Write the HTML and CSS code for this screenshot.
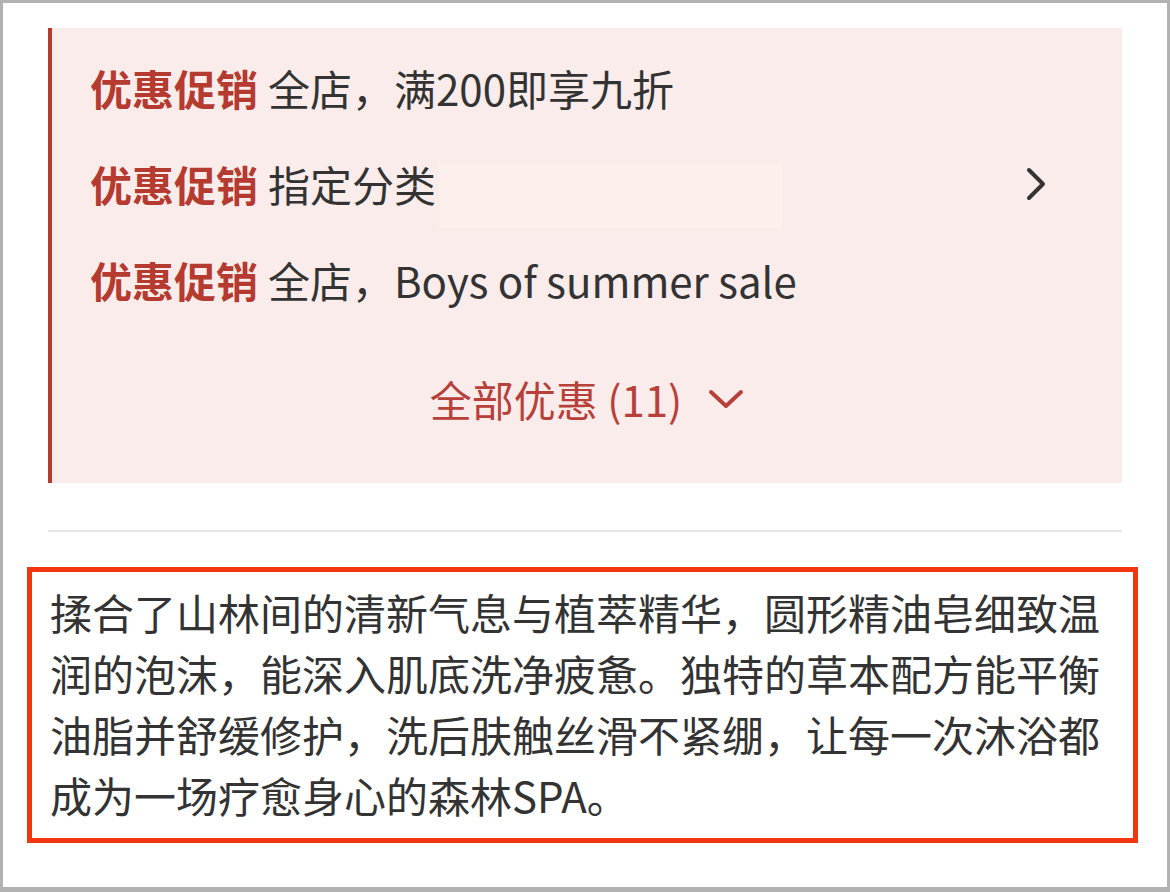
FILE: index.html
```html
<!DOCTYPE html>
<html lang="zh-CN">

<head>
    <meta charset="UTF-8">
    <meta name="viewport" content="width=device-width, initial-scale=1.0">
    <title>商品详情</title>

    <link rel="stylesheet" href="styles.css">
</head>

<body>
    <div class="frame">
        <main class="content">
            <section class="promo">
                <div class="promo-row">
                    <span class="promo-tag">优惠促销</span>
                    <span class="promo-text">全店，满200即享九折</span>
                </div>
                <div class="promo-row">
                    <span class="promo-tag">优惠促销</span>
                    <span class="promo-text">指定分类</span>
                    <span class="promo-blank"></span>
                    <svg class="arrow-right" width="24" height="34" viewBox="0 0 24 34">
                        <path d="M5 3 L19 17 L5 31" fill="none" stroke="#333" stroke-width="4" stroke-linecap="round" stroke-linejoin="round" />
                    </svg>
                </div>
                <div class="promo-row">
                    <span class="promo-tag">优惠促销</span>
                    <span class="promo-text">全店，Boys of summer sale</span>
                </div>
                <div class="promo-more">
                    <span>全部优惠 (11)</span>
                    <svg class="arrow-down" width="36" height="24" viewBox="0 0 36 24">
                        <path d="M3 5 L18 19 L33 5" fill="none" stroke="#b8403a" stroke-width="4" stroke-linecap="round" stroke-linejoin="round" />
                    </svg>
                </div>
            </section>

            <hr class="divider">

            <p class="desc">揉合了山林间的清新气息与植萃精华，圆形精油皂细致温润的泡沫，能深入肌底洗净疲惫。独特的草本配方能平衡油脂并舒缓修护，洗后肤触丝滑不紧绷，让每一次沐浴都成为一场疗愈身心的森林SPA。</p>
        </main>
    </div>
</body>

</html>
```

FILE: styles.css
```css
* {
    box-sizing: border-box;
}

body {
    margin: 0;
    background: #fff;
    font-family: "Noto Sans CJK SC", "Noto Sans", sans-serif;
    color: #333;
}

.frame {
    width: 1170px;
    height: 892px;
    border: 3px solid #b2b2b2;
    border-bottom-width: 5px;
    overflow: hidden;
}

.content {
    padding: 25px 45px 0 45px;
}

/* Promotions */

.promo {
    height: 455px;
    background: #f9ecea;
    border-left: 4px solid #b53a30;
    padding-top: 12px;
}

.promo-row {
    display: flex;
    align-items: center;
    height: 96px;
    padding: 0 74px 0 38px;
    font-size: 42px;
    line-height: 1;
}

.promo-tag {
    font-weight: 700;
    color: #b53a30;
    margin-right: 10px;
}

.promo-blank {
    width: 343px;
    height: 65px;
    margin: 22px 0 0 3px;
    background: #fcefec;
}

.arrow-right {
    margin-left: auto;
}

.promo-more {
    display: flex;
    align-items: center;
    justify-content: center;
    gap: 26px;
    margin-top: 50px;
    font-size: 42px;
    line-height: 1;
    color: #b8403a;
}

.divider {
    margin: 47px 0 0 0;
    border: 0;
    height: 2px;
    background: #e6e6e6;
}

/* Description */

.desc {
    margin: 35px -16px 0 -21px;
    padding: 9px 20px 13px 18px;
    border: 5px solid #f2360f;
    font-size: 42px;
    line-height: 61px;
    color: #333;
}
```
